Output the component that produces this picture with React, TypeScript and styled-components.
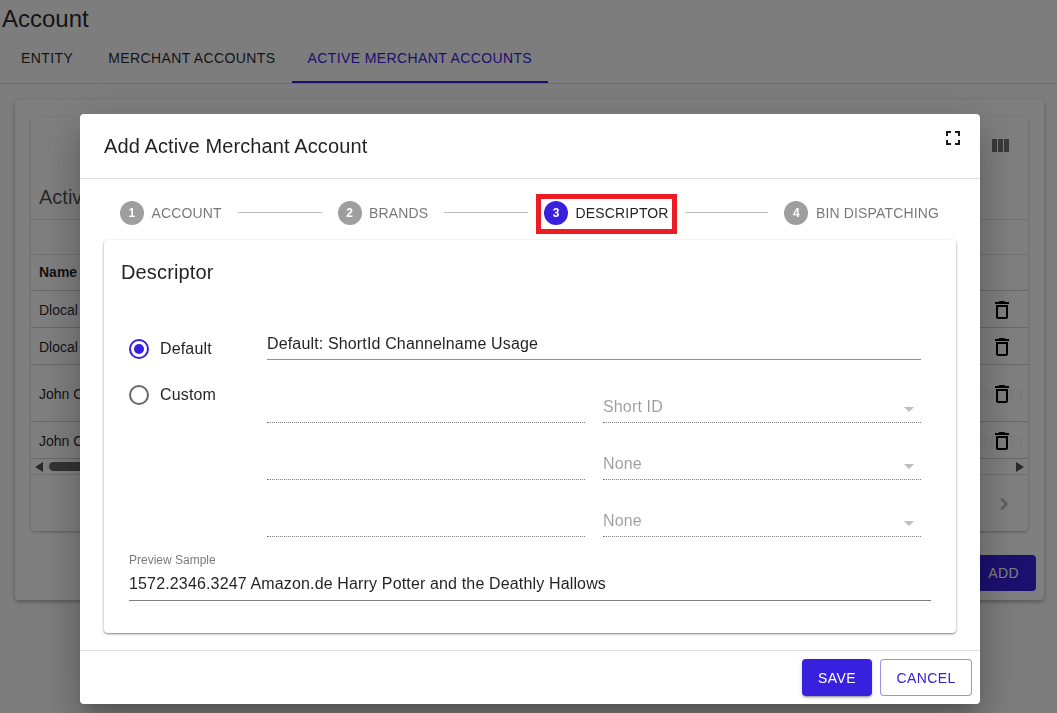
import React from 'react';
import styled, { createGlobalStyle } from 'styled-components';

const GlobalStyle = createGlobalStyle`
  html, body {
    margin: 0;
    padding: 0;
    background: #fafafa;
    font-family: "Liberation Sans", Arial, sans-serif;
    color: rgba(0, 0, 0, 0.87);
  }
  * { box-sizing: border-box; }
`;

const Page = styled.div`
  width: 1057px;
  height: 713px;
  overflow: hidden;
`;

const PageTitle = styled.h1`
  margin: 0;
  padding: 5px 2px 0;
  height: 40px;
  font-size: 24px;
  line-height: 28px;
  font-weight: 400;
`;

const Tabs = styled.div`
  display: flex;
  height: 44px;
  padding-left: 5px;
  border-bottom: 1px solid rgba(0, 0, 0, 0.12);
`;

const Tab = styled.div<{ $active?: boolean; $gap?: number }>`
  padding: 0 16px 6px;
  margin-right: ${(p) => p.$gap ?? 0}px;
  display: flex;
  align-items: center;
  height: 43px;
  font-size: 14px;
  letter-spacing: 0.39px;
  color: ${(p) => (p.$active ? '#3820df' : 'rgba(0, 0, 0, 0.87)')};
  border-bottom: 2px solid ${(p) => (p.$active ? '#3820df' : 'transparent')};
`;

const OuterPaper = styled.div`
  width: 1029px;
  height: 500px;
  margin: 16px 0 0 15px;
  padding: 17px 16px;
  background: #fff;
  border-radius: 4px;
  box-shadow: 0 2px 4px rgba(0, 0, 0, 0.3);
`;

const InnerPaper = styled.div`
  width: 997px;
  height: 414px;
  background: #fff;
  border-radius: 4px;
  box-shadow: 0 1px 3px rgba(0, 0, 0, 0.3);
`;

const TableToolbar = styled.div`
  height: 66px;
  padding: 17px 16px 0;
  display: flex;
  justify-content: flex-end;
  color: rgba(0, 0, 0, 0.54);
`;

const TableTitle = styled.div`
  height: 37px;
  padding: 0 8px;
  font-size: 20px;
  line-height: 28px;
  color: rgba(0, 0, 0, 0.7);
  border-bottom: 1px solid rgba(0, 0, 0, 0.1);
`;

const FilterRow = styled.div`
  height: 35px;
  border-bottom: 1px solid rgba(0, 0, 0, 0.12);
`;

const TableRow = styled.div<{ $height: number }>`
  height: ${(p) => p.$height}px;
  padding: 2px 14px 0 8px;
  display: flex;
  align-items: center;
  justify-content: space-between;
  font-size: 14px;
  border-bottom: 1px solid rgba(0, 0, 0, 0.18);
`;

const HeadCell = styled.span`
  margin-bottom: 4px;
  font-weight: 700;
`;

const ActionCell = styled.span`
  position: relative;
  display: flex;
  color: #000;
  svg { position: relative; }
`;

const FaintLabel = styled.span`
  position: absolute;
  right: -12px;
  top: 4px;
  font-size: 14px;
  letter-spacing: 0.4px;
  color: rgba(0, 0, 0, 0.07);
`;

const ScrollBar = styled.div`
  height: 16px;
  padding: 0 4px;
  display: flex;
  align-items: center;
  gap: 6px;
  border-bottom: 1px solid rgba(0, 0, 0, 0.12);
`;

const ArrowLeft = styled.div`
  width: 0;
  height: 0;
  border-style: solid;
  border-width: 5px 8px 5px 0;
  border-color: transparent #555 transparent transparent;
`;

const ArrowRight = styled.div`
  width: 0;
  height: 0;
  margin-left: auto;
  border-style: solid;
  border-width: 5px 0 5px 8px;
  border-color: transparent transparent transparent #555;
`;

const Thumb = styled.div`
  width: 600px;
  height: 9px;
  border-radius: 5px;
  background: #666;
`;

const Pager = styled.div`
  height: 56px;
  padding: 2px 12px 0 0;
  display: flex;
  align-items: center;
  justify-content: flex-end;
  color: rgba(0, 0, 0, 0.3);
`;

const OuterActions = styled.div`
  display: flex;
  justify-content: flex-end;
  margin: 24px -8px 0 0;
`;

const AddButton = styled.div`
  width: 120px;
  height: 36px;
  padding-right: 17px;
  display: flex;
  align-items: center;
  justify-content: flex-end;
  font-size: 14px;
  letter-spacing: 0.4px;
  color: #fff;
  background: #3820df;
  border-radius: 4px;
`;

const Overlay = styled.div`
  position: fixed;
  inset: 0;
  background: rgba(0, 0, 0, 0.5);
`;

const Modal = styled.div`
  position: fixed;
  left: 80px;
  top: 114px;
  width: 900px;
  height: 590px;
  background: #fff;
  border-radius: 4px;
  display: flex;
  flex-direction: column;
  box-shadow: 0 11px 15px -7px rgba(0, 0, 0, 0.2), 0 24px 38px 3px rgba(0, 0, 0, 0.14),
    0 9px 46px 8px rgba(0, 0, 0, 0.12);
`;

const ModalHeader = styled.div`
  height: 65px;
  padding: 0 15px 0 24px;
  display: flex;
  justify-content: space-between;
  border-bottom: 1px solid rgba(0, 0, 0, 0.12);
`;

const ModalTitle = styled.h2`
  margin: 18px 0 0;
  font-size: 20px;
  line-height: 28px;
  font-weight: 400;
  letter-spacing: 0.12px;
`;

const FullscreenIcon = styled.svg`
  margin-top: 12px;
  color: #1a1a1a;
`;

const Stepper = styled.div`
  height: 61px;
  padding: 6px 41px 0 40px;
  display: flex;
  align-items: center;
  gap: 16px;
`;

const Step = styled.div<{ $active?: boolean }>`
  position: relative;
  display: flex;
  align-items: center;
  gap: 7.5px;
  font-size: 14px;
  letter-spacing: 0.15px;
  color: ${(p) => (p.$active ? 'rgba(0, 0, 0, 0.87)' : 'rgba(0, 0, 0, 0.54)')};
`;

const StepDot = styled.span<{ $active?: boolean }>`
  width: 24px;
  height: 24px;
  border-radius: 50%;
  display: flex;
  align-items: center;
  justify-content: center;
  font-size: 12px;
  font-weight: 700;
  color: #fff;
  background: ${(p) => (p.$active ? '#3820df' : '#9e9e9e')};
`;

const Connector = styled.div`
  flex: 1;
  height: 1px;
  background: #bdbdbd;
`;

const Highlight = styled.div`
  position: absolute;
  left: -8px;
  right: -8px;
  top: -7px;
  bottom: -9px;
  border: 5px solid #ed1c24;
`;

const ContentCard = styled.div`
  width: 852px;
  height: 393px;
  margin-left: 24px;
  padding: 20px 16px 0;
  background: #fff;
  border-radius: 4px;
  box-shadow: 0 1px 3px rgba(0, 0, 0, 0.35), 0 1px 1px rgba(0, 0, 0, 0.2);
`;

const CardTitle = styled.h3`
  margin: 0 0 0 1px;
  height: 24px;
  font-size: 20px;
  line-height: 24px;
  font-weight: 400;
  letter-spacing: 0.15px;
`;

const FormGrid = styled.div`
  display: grid;
  grid-template-columns: 138px 654px;
  margin: 50px 0 0 9px;
`;

const RadioColumn = styled.div`
  display: flex;
  flex-direction: column;
  gap: 26px;
  padding-top: 5px;
`;

const RadioRow = styled.label`
  display: flex;
  align-items: center;
  gap: 11px;
  height: 20px;
  font-size: 16px;
  letter-spacing: 0.15px;
`;

const RadioCircle = styled.span<{ $checked?: boolean }>`
  width: 20px;
  height: 20px;
  border-radius: 50%;
  display: flex;
  align-items: center;
  justify-content: center;
  border: 2px solid ${(p) => (p.$checked ? '#3820df' : 'rgba(0, 0, 0, 0.6)')};
  &::after {
    content: '';
    display: ${(p) => (p.$checked ? 'block' : 'none')};
    width: 10px;
    height: 10px;
    border-radius: 50%;
    background: #3820df;
  }
`;

const FieldColumn = styled.div`
  display: flex;
  flex-direction: column;
`;

const TextValue = styled.div`
  height: 26px;
  margin-bottom: 6px;
  font-size: 16px;
  line-height: 20px;
  letter-spacing: 0.15px;
  border-bottom: 1px solid rgba(0, 0, 0, 0.42);
`;

const FieldRow = styled.div`
  display: grid;
  grid-template-columns: 318px 318px;
  column-gap: 18px;
  height: 57px;
`;

const DisabledField = styled.div`
  position: relative;
  height: 57px;
  padding-top: 31px;
  font-size: 16px;
  line-height: 20px;
  letter-spacing: 0.15px;
  color: rgba(0, 0, 0, 0.38);
  border-bottom: 1px dotted rgba(0, 0, 0, 0.5);
`;

const SelectArrow = styled.span`
  position: absolute;
  right: 7px;
  bottom: 10px;
  width: 0;
  height: 0;
  border-style: solid;
  border-width: 5px 5px 0;
  border-color: rgba(0, 0, 0, 0.26) transparent transparent;
`;

const Preview = styled.div`
  width: 802px;
  margin: 16px 0 0 9px;
  border-bottom: 1px solid rgba(0, 0, 0, 0.5);
  height: 48px;
`;

const PreviewLabel = styled.div`
  height: 21px;
  font-size: 12px;
  line-height: 14px;
  color: rgba(0, 0, 0, 0.54);
`;

const PreviewValue = styled.div`
  font-size: 16px;
  line-height: 20px;
  letter-spacing: 0.15px;
`;

const ModalFooter = styled.div`
  margin-top: 17px;
  flex: 1;
  padding: 8px;
  display: flex;
  justify-content: flex-end;
  gap: 8px;
  border-top: 1px solid rgba(0, 0, 0, 0.12);
`;

const Button = styled.button<{ $primary?: boolean }>`
  height: 37px;
  width: ${(p) => (p.$primary ? 70 : 92)}px;
  padding: 0;
  border-radius: 4px;
  font-family: inherit;
  font-size: 14px;
  font-weight: 400;
  letter-spacing: 0.4px;
  color: ${(p) => (p.$primary ? '#fff' : '#3820df')};
  background: ${(p) => (p.$primary ? '#3820df' : '#fff')};
  border: ${(p) => (p.$primary ? 'none' : '1px solid rgba(56, 32, 223, 0.5)')};
  box-shadow: ${(p) => (p.$primary ? '0 3px 1px -2px rgba(0,0,0,.2), 0 2px 2px rgba(0,0,0,.14), 0 1px 5px rgba(0,0,0,.12)' : 'none')};
`;

const MaterialIcon = ({ d }: { d: string }) => (
  <svg width="24" height="24" viewBox="0 0 24 24" fill="currentColor">
    <path d={d} />
  </svg>
);

const DELETE_PATH = 'M6 19c0 1.1.9 2 2 2h8c1.1 0 2-.9 2-2V7H6v12zM8 9h8v10H8V9zm7.5-5l-1-1h-5l-1 1H5v2h14V4z';
const COLUMNS_PATH = 'M10 18h5V5h-5v13zm-6 0h5V5H4v13zM16 5v13h5V5h-5z';
const CHEVRON_PATH = 'M10 6L8.59 7.41 13.17 12l-4.58 4.59L10 18l6-6z';
const FULLSCREEN_PATH = 'M7 14H5v5h5v-2H7v-3zm-2-4h2V7h3V5H5v5zm12 7h-3v2h5v-5h-2v3zM14 5v2h3v3h2V5h-5z';

const rows = [
  { name: 'Dlocal', height: 37 },
  { name: 'Dlocal', height: 37 },
  { name: 'John C', height: 57, tag: 'ENTITY' },
  { name: 'John C', height: 37, tag: 'ENTITY' },
];

const steps = ['Account', 'Brands', 'Descriptor', 'Bin Dispatching'];

const App = () => {
  return (
    <Page>
      <GlobalStyle />
      <PageTitle>Account</PageTitle>
      <Tabs>
        <Tab $gap={3}>ENTITY</Tab>
        <Tab $gap={0}>MERCHANT ACCOUNTS</Tab>
        <Tab $active>ACTIVE MERCHANT ACCOUNTS</Tab>
      </Tabs>
      <OuterPaper>
        <InnerPaper>
          <TableToolbar>
            <MaterialIcon d={COLUMNS_PATH} />
          </TableToolbar>
          <TableTitle>Active</TableTitle>
          <FilterRow />
          <TableRow $height={36}>
            <HeadCell>Name</HeadCell>
          </TableRow>
          {rows.map((row, i) => (
            <TableRow key={i} $height={row.height}>
              {row.name}
              <ActionCell>
                {row.tag && <FaintLabel>{row.tag}</FaintLabel>}
                <MaterialIcon d={DELETE_PATH} />
              </ActionCell>
            </TableRow>
          ))}
          <ScrollBar>
            <ArrowLeft />
            <Thumb />
            <ArrowRight />
          </ScrollBar>
          <Pager>
            <MaterialIcon d={CHEVRON_PATH} />
          </Pager>
        </InnerPaper>
        <OuterActions>
          <AddButton>ADD</AddButton>
        </OuterActions>
      </OuterPaper>

      <Overlay />
      <Modal>
        <ModalHeader>
          <ModalTitle>Add Active Merchant Account</ModalTitle>
          <FullscreenIcon width="24" height="24" viewBox="0 0 24 24" fill="currentColor">
            <path d={FULLSCREEN_PATH} />
          </FullscreenIcon>
        </ModalHeader>
        <Stepper>
          {steps.map((label, i) => (
            <React.Fragment key={label}>
              {i > 0 && <Connector />}
              <Step $active={i === 2}>
                <StepDot $active={i === 2}>{i + 1}</StepDot>
                {label.toUpperCase()}
                {i === 2 && <Highlight />}
              </Step>
            </React.Fragment>
          ))}
        </Stepper>
        <ContentCard>
          <CardTitle>Descriptor</CardTitle>
          <FormGrid>
            <RadioColumn>
              <RadioRow>
                <RadioCircle $checked />
                Default
              </RadioRow>
              <RadioRow>
                <RadioCircle />
                Custom
              </RadioRow>
            </RadioColumn>
            <FieldColumn>
              <TextValue>Default: ShortId Channelname Usage</TextValue>
              {['Short ID', 'None', 'None'].map((value, i) => (
                <FieldRow key={i}>
                  <DisabledField />
                  <DisabledField>
                    {value}
                    <SelectArrow />
                  </DisabledField>
                </FieldRow>
              ))}
            </FieldColumn>
          </FormGrid>
          <Preview>
            <PreviewLabel>Preview Sample</PreviewLabel>
            <PreviewValue>1572.2346.3247 Amazon.de Harry Potter and the Deathly Hallows</PreviewValue>
          </Preview>
        </ContentCard>
        <ModalFooter>
          <Button $primary>SAVE</Button>
          <Button>CANCEL</Button>
        </ModalFooter>
      </Modal>
    </Page>
  );
};

export default App;
